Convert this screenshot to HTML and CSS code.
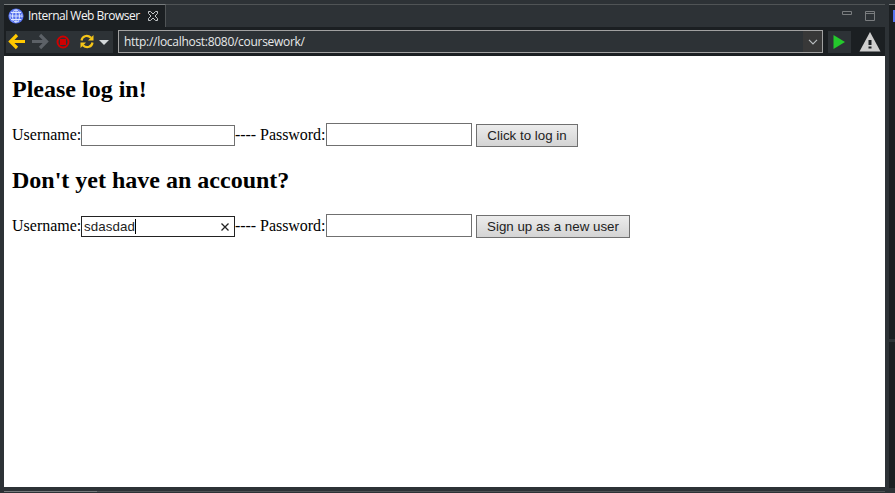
FILE: index.html
```
<!DOCTYPE html>
<html lang="en">
<head>
<meta charset="utf-8">
<title>Internal Web Browser</title>
<link rel="stylesheet" href="styles.css">
</head>
<body>
<div class="workbench">
  <section class="view">
    <header class="tabs">
      <div class="tab">
        <svg class="globe" width="16" height="16" viewBox="0 0 16 16"><circle cx="8" cy="8" r="7.6" fill="#5470ee"/><g fill="none" stroke="#dce7ff" stroke-width="1"><ellipse cx="8" cy="8" rx="3.500" ry="6"/><circle cx="8" cy="8" r="6" stroke-dasharray="1.500 1.640"/><path d="M8 1.500v13M1.500 8h13M3 4.500h10M3 11.500h10"/></g></svg>
        <span class="tab-title">Internal Web Browser</span>
        <svg class="close" width="12" height="12" viewBox="0 0 12 12" fill="none" stroke="#c5c8ca"><path d="M1.500 1.500h2L6 4l2.500-2.500h2v2L8 6l2.500 2.500v2h-2L6 8l-2.500 2.500h-2v-2L4 6 1.500 3.500z"/></svg>
      </div>
      <div class="window-actions">
        <svg width="10" height="4" viewBox="0 0 10 4" fill="none" stroke="#7a7d7f"><path d="M.5.500h9v3h-9z"/></svg>
        <svg width="10" height="10" viewBox="0 0 10 10" fill="none" stroke="#7a7d7f"><path d="M.5.500h9v9h-9zM.5 2.500h9"/></svg>
      </div>
    </header>
    <nav class="toolbar">
      <div class="tools">
        <svg width="107" height="22" viewBox="0 0 107 22">
          <path d="M11 4L4.500 10.500l6.500 6.500M5 10.500H19" fill="none" stroke="#ffc800" stroke-width="3.200"/>
          <path d="M34 4l6.500 6.500-6.500 6.500M40 10.500H26" fill="none" stroke="#5c6167" stroke-width="3.200"/>
          <circle cx="57" cy="11" r="5.500" fill="none" stroke="#d00000" stroke-width="1.900"/><path d="M54 8h6v6h-6z" fill="#d00000"/>
          <path d="M75.500 9.500C76 5.200 81 3.200 85 6.700M86.500 11.500c-.5 4.300-5.500 6.300-9.500 2.800" fill="none" stroke="#f5c518" stroke-width="2.200"/><path d="M87.500 4v5.500H82zM74.500 17v-5.500H80z" fill="#f5c518"/>
          <path d="M93 9h10l-5 5z" fill="#d3d8da"/>
        </svg>
      </div>
      <div class="address"><span class="url">http://localhost:8080/coursework/</span><span class="drop"><svg width="10" height="6" viewBox="0 0 10 6"><path d="M1 .800l4 4 4-4" fill="none" stroke="#b9bdbf" stroke-width="1.200"/></svg></span></div>
      <div class="go"><svg width="23" height="22" viewBox="0 0 23 22"><path d="M5.500 4v14L17 11z" fill="#24c92c"/></svg></div>
      <svg class="warning" width="22" height="20" viewBox="0 0 22 20"><path d="M11 0l10.500 19.500H.5z" fill="#cecece"/><path d="M9.500 8h3v5h-3zM9.500 14.500h3v2h-3z" fill="#1b1f22"/></svg>
    </nav>
    <main class="page">
      <h2>Please log in!</h2>
      <form class="row">
        <label class="user-label">Username:</label><div class="field user"></div>
        <label class="pass-label">---- Password:</label><div class="field pass"></div>
        <button class="login" type="button">Click to log in</button>
      </form>
      <h2>Don't yet have an account?</h2>
      <form class="row">
        <label class="user-label">Username:</label><div class="field user focused"><span class="value">sdasdad</span><i class="caret"></i><svg class="clear" width="8" height="8" viewBox="0 0 8 8"><path d="M.5.500l7 7M7.500.500l-7 7" stroke="#222" stroke-width="1.300"/></svg></div>
        <label class="pass-label">---- Password:</label><div class="field pass"></div>
        <button class="signup" type="button">Sign up as a new user</button>
      </form>
    </main>
    <footer class="bottom"><div class="bottom-tab"></div></footer>
  </section>
  <aside class="side"><div class="side-top"><div class="side-icon"></div></div><div class="side-bottom"></div></aside>
</div>
</body>
</html>
```
FILE: styles.css
```
* { box-sizing: border-box; }
body { margin: 0; background: #2d3236; overflow: hidden; }
svg { display: block; flex: none; }
.workbench { display: flex; width: 895px; height: 493px; padding: 4px 0 0 4px; }
.view { width: 881px; display: flex; flex-direction: column; }
.tabs { display: flex; height: 23px; border-top: 1px solid #505456; background: #2d3236; justify-content: space-between; }
.tab { width: 162px; margin-top: -1px; display: flex; align-items: center; padding-left: 4px; border-top: 1px solid #777b7d; border-right: 1px solid #505456; background: #1b1f22; }
.tab-title { margin-left: 4px; width: 112px; font: 12px/16px "Open Sans", "Noto Sans", sans-serif; letter-spacing: -0.5px; white-space: nowrap; color: #f5f5f5; }
.close { margin-left: 7px; }
.window-actions { display: flex; gap: 13px; padding: 6px 10px 0 0; }
.toolbar { display: flex; height: 29px; align-items: center; background: #1b1f22; padding-left: 2px; }
.tools { width: 107px; height: 22px; background: #2d3236; }
.address { display: flex; width: 705px; height: 23px; margin-left: 5px; border: 1px solid #a1a1a1; background: #2d3236; align-items: center; justify-content: space-between; }
.url { padding-left: 5px; font: 12px/18px "Open Sans", "Noto Sans", sans-serif; letter-spacing: -0.29px; color: #e6e8e9; }
.drop { width: 19px; height: 21px; display: flex; align-items: center; justify-content: center; background: #383838; }
.go { width: 23px; height: 22px; margin-left: 5px; background: #2d3236; }
.warning { margin-left: 8px; }
.page { height: 431px; padding: 20px 8px 0; background: #fff; color: #000; font: 16px/18px "Liberation Serif", serif; }
h2 { margin: 0; height: 47px; font-size: 24px; line-height: 27px; }
.row { display: flex; height: 24px; margin: 0 0 20px; white-space: pre; }
.user-label { width: 69px; padding-top: 3px; }
.pass-label { width: 91px; padding-top: 3px; letter-spacing: -0.05px; }
.field { border: 1px solid #707070; display: flex; align-items: center; }
.user { width: 154px; height: 21px; margin-top: 2px; }
.pass { width: 146px; height: 23px; }
.focused { border-color: #222; padding: 0 5px 0 2px; }
.value { font: 13.33px/16px "Liberation Sans", sans-serif; letter-spacing: 0.1px; color: #222; }
.caret { width: 1px; height: 15px; background: #000; }
.clear { margin-left: auto; }
button { height: 23px; margin: 1px 0 0 4px; padding: 0; border: 1px solid #707070; background: linear-gradient(#ececec, #d4d4d4); color: #222; font: 13.33px/19px "Liberation Sans", sans-serif; }
.login { width: 102px; }
.signup { width: 154px; }
.bottom { padding-top: 4px; }
.bottom-tab { width: 881px; height: 1px; background: linear-gradient(90deg, #777b7d 93px, #505456 93px); }
.side { width: 6px; margin-left: 4px; }
.side-top { height: 335px; padding-top: 5px; border-top: 1px solid #777b7d; background: #1b1f22; }
.side-icon { width: 2px; height: 12px; margin-left: 4px; background: #5674ee; }
.side-bottom { height: 146px; margin-top: 3px; background: #1b1f22; }
```
